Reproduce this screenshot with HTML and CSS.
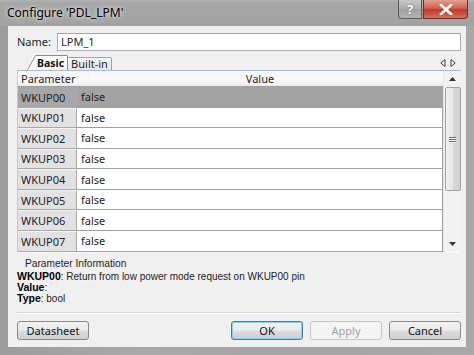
FILE: index.html
```html
<!DOCTYPE html>
<html>
<head>
<meta charset="utf-8">
<link rel="stylesheet" href="styles.css">
</head>
<body>
<div class="window">
  <div class="titlebar">
    <span class="title">Configure 'PDL_LPM'</span>
    <div class="caption-btns">
      <div class="cbtn help">?</div>
      <div class="cbtn close">
        <svg width="14" height="11" viewBox="0 0 14 11"><path d="M2 1 L12 10 M12 1 L2 10" stroke="#fff" stroke-width="2.6" stroke-linecap="square"/></svg>
      </div>
    </div>
  </div>
  <div class="client">
    <div class="name-row">
      <span class="label">Name:</span>
      <div class="input">LPM_1</div>
    </div>
    <div class="tabs">
      <div class="tab active">
        <svg class="slant" width="9" height="15" viewBox="0 0 9 15"><path d="M0 15 L8 0 L9 0 L9 15 Z" fill="#fdfdfd"/><path d="M0.5 15 L8.5 0.5 L9 0.5" fill="none" stroke="#8c8c8c" stroke-width="1"/></svg>
        <span class="tab-label">Basic</span>
      </div>
      <div class="tab">Built-in</div>
      <div class="tab-arrows">
        <svg width="6" height="8" viewBox="0 0 6 8"><path d="M5 0.5 L0.8 4 L5 7.5 Z" fill="none" stroke="#444" stroke-width="1"/></svg>
        <svg width="6" height="8" viewBox="0 0 6 8"><path d="M1 0.5 L5.2 4 L1 7.5 Z" fill="none" stroke="#444" stroke-width="1"/></svg>
      </div>
    </div>
    <div class="grid">
      <div class="table">
        <div class="row head"><div class="c1">Parameter</div><div class="c2 center">Value</div></div>
        <div class="row sel"><div class="c1">WKUP00</div><div class="c2">false</div></div>
        <div class="row"><div class="c1">WKUP01</div><div class="c2">false</div></div>
        <div class="row"><div class="c1">WKUP02</div><div class="c2">false</div></div>
        <div class="row"><div class="c1">WKUP03</div><div class="c2">false</div></div>
        <div class="row"><div class="c1">WKUP04</div><div class="c2">false</div></div>
        <div class="row"><div class="c1">WKUP05</div><div class="c2">false</div></div>
        <div class="row"><div class="c1">WKUP06</div><div class="c2">false</div></div>
        <div class="row"><div class="c1">WKUP07</div><div class="c2">false</div></div>
      </div>
      <div class="scrollbar">
        <div class="sarrow">
          <svg width="7" height="4" viewBox="0 0 7 4"><path d="M0 4 L3.5 0 L7 4 Z" fill="#333"/></svg>
        </div>
        <div class="thumb">
          <div class="grip"></div><div class="grip"></div><div class="grip"></div>
        </div>
        <div class="strack"></div>
        <div class="sarrow">
          <svg width="7" height="4" viewBox="0 0 7 4"><path d="M0 0 L3.5 4 L7 0 Z" fill="#333"/></svg>
        </div>
      </div>
    </div>
    <div class="info">
      <div class="info-title">Parameter Information</div>
      <div class="info-line"><b>WKUP00</b>: Return from low power mode request on WKUP00 pin</div>
      <div class="info-line"><b>Value</b>:</div>
      <div class="info-line"><b>Type</b>: bool</div>
    </div>
    <div class="sep"></div>
    <div class="buttons">
      <div class="btn">Datasheet</div>
      <div class="spacer"></div>
      <div class="btn default">OK</div>
      <div class="btn disabled">Apply</div>
      <div class="btn">Cancel</div>
    </div>
  </div>
</div>
</body>
</html>
```

FILE: styles.css
```css
* { box-sizing: border-box; }
html, body { margin: 0; padding: 0; }
body {
  width: 474px;
  height: 355px;
  overflow: hidden;
  font-family: "Noto Sans", "Open Sans", sans-serif;
  font-size: 11px;
  color: #1e1e1e;
}
.window {
  width: 474px;
  height: 355px;
  display: flex;
  flex-direction: column;
  background: linear-gradient(90deg, #9c9c9c 0%, #a9a9a9 30%, #a4a4a4 60%, #a8a8a8 100%);
}
.titlebar {
  height: 26px;
  flex: none;
  display: flex;
  align-items: flex-start;
  background: linear-gradient(180deg, #b4b4b4 0px, #a6a6a6 3px, #a3a3a3 100%);
}
.title {
  margin: 4px 0 0 7px;
  font-size: 12px;
  color: #000;
  text-shadow: 0 0 6px #e8e8e8, 0 0 3px #e0e0e0;
}
.caption-btns {
  margin-left: auto;
  margin-right: 6px;
  display: flex;
  gap: 1px;
}
.cbtn {
  height: 19px;
  border: 1px solid #5c5c5c;
  border-top: none;
  display: flex;
  align-items: center;
  justify-content: center;
}
.help {
  width: 24px;
  border-radius: 0 0 0 4px;
  background: linear-gradient(180deg, #c9c9c9, #adadad 50%, #a2a2a2 51%, #b5b5b5);
  color: #fff;
  font-weight: bold;
  font-size: 13px;
  text-shadow: 0 0 2px #555;
}
.close {
  width: 45px;
  border-radius: 0 0 4px 0;
  background: linear-gradient(180deg, #e3a08f, #cf6350 45%, #c0392a 55%, #d5715e);
  border-color: #7a2a20;
}
.client {
  flex: none;
  height: 321px;
  margin: 0 8px 0 8px;
  background: #f0f0f0;
  padding: 7px 5px 0 9px;
  display: flex;
  flex-direction: column;
}
.name-row {
  height: 17px;
  display: flex;
  align-items: center;
}
.label { width: 40px; }
.input {
  flex: 1;
  height: 18px;
  background: #fff;
  border: 1px solid #abadb3;
  border-top-color: #a0a6b0;
  padding-left: 3px;
  line-height: 15px;
}
.tabs {
  margin-top: 5px;
  height: 16px;
  display: flex;
  align-items: flex-end;
  padding-left: 10px;
  border-bottom: 1px solid #a9bccf;
}
.tab {
  width: 44px;
  height: 13px;
  line-height: 12px;
  text-align: center;
  background: linear-gradient(180deg, #f8f8f8, #e6e6e6);
  border: 1px solid #a0a0a0;
  border-left: none;
  border-bottom: none;
  border-radius: 0 2px 0 0;
}
.tab.active {
  width: 41px;
  height: 15px;
  display: flex;
  background: none;
  border: none;
  border-radius: 0;
  text-align: left;
}
.slant { flex: none; display: block; }
.tab-label {
  flex: 1;
  font-weight: bold;
  font-size: 10.5px;
  line-height: 14px;
  padding-left: 1px;
  background: linear-gradient(180deg, #fdfdfd, #f3f3f3);
  border-top: 1px solid #8c8c8c;
  border-right: 1px solid #8c8c8c;
  border-radius: 0 2px 0 0;
  color: #111;
}
.tab-arrows {
  margin-left: auto;
  margin-right: 5px;
  align-self: center;
  display: flex;
  gap: 4px;
}
.grid {
  height: 181px;
  display: flex;
  border-left: 1px solid #c8c8c8;
}
.table {
  flex: 1;
  display: flex;
  flex-direction: column;
  background: #f0f0f0;
}
.row {
  height: 20.57px;
  flex: none;
  display: flex;
}
.row .c1 {
  width: 59px;
  padding-left: 3px;
  display: flex;
  align-items: center;
  background: #e2e2e2;
  border-right: 1px solid #a8a8a8;
  border-bottom: 1px solid #a8a8a8;
  border-top: 1px solid #f4f4f4;
}
.row .c2 {
  flex: 1;
  padding-left: 4px;
  display: flex;
  align-items: center;
  background: #fff;
  border-bottom: 1px solid #a0a0a0;
  border-right: 1px solid #a0a0a0;
}
.row.head {
  height: 16px;
}
.row.head .c1, .row.head .c2 {
  background: linear-gradient(180deg, #f6f6f6, #f9f9f9 60%, #ececec);
  border-top: none;
  border-right: none;
  border-bottom: 1px solid #a0a0a0;
}
.c2.center { justify-content: center; padding-left: 0; }
.row.sel .c1 { background: #a7a7a7; border-top-color: #a7a7a7; }
.row.sel .c2 { background: #a3a3a3; }
.scrollbar {
  width: 18px;
  display: flex;
  flex-direction: column;
  align-items: center;
  background: #f2f2f2;
  border-left: 1px solid #e6e6e6;
}
.sarrow {
  height: 16px;
  width: 17px;
  flex: none;
  display: flex;
  align-items: center;
  justify-content: center;
}
.thumb {
  height: 104px;
  width: 16px;
  flex: none;
  border: 1px solid #a2a2a2;
  border-radius: 2px;
  background: linear-gradient(90deg, #f1f1f1, #e4e4e4 50%, #d6d6d6 51%, #d0d0d0);
  display: flex;
  flex-direction: column;
  align-items: center;
  justify-content: center;
  gap: 1px;
}
.grip {
  width: 7px;
  height: 1px;
  background: #6a6a6a;
  box-shadow: 0 1px 0 #fafafa;
}
.strack { flex: 1; }
.info {
  height: 59px;
  padding: 4px 0 0 0;
  display: flex;
  flex-direction: column;
  border-top: 1px solid #fafafa;
  font-family: "Liberation Sans", Arial, sans-serif;
  font-size: 10px;
}
.info-title {
  padding-left: 8px;
  height: 14px;
  line-height: 14px;
  font-size: 10.2px;
}
.info-line {
  height: 11px;
  line-height: 11px;
  white-space: nowrap;
}
.info-line b { font-weight: bold; color: #000; font-size: 10.5px; }
.sep {
  height: 2px;
  margin-top: 1px;
  border-top: 1px solid #d5d5d5;
  border-bottom: 1px solid #fff;
}
.buttons {
  margin-top: 7px;
  height: 19px;
  display: flex;
  gap: 7px;
}
.spacer { flex: 1; }
.btn {
  width: 72px;
  height: 19px;
  border: 1px solid #8a8a8a;
  border-radius: 3px;
  background: linear-gradient(180deg, #f2f2f2, #ebebeb 48%, #dddddd 52%, #cfcfcf);
  display: flex;
  align-items: center;
  justify-content: center;
  color: #111;
}
.btn.default {
  border-color: #3c7fb1;
  box-shadow: inset 0 0 0 1px #8fd0f0;
}
.btn.disabled {
  background: #f4f4f4;
  border-color: #c5c5c5;
  color: #a0a0a0;
}
```
